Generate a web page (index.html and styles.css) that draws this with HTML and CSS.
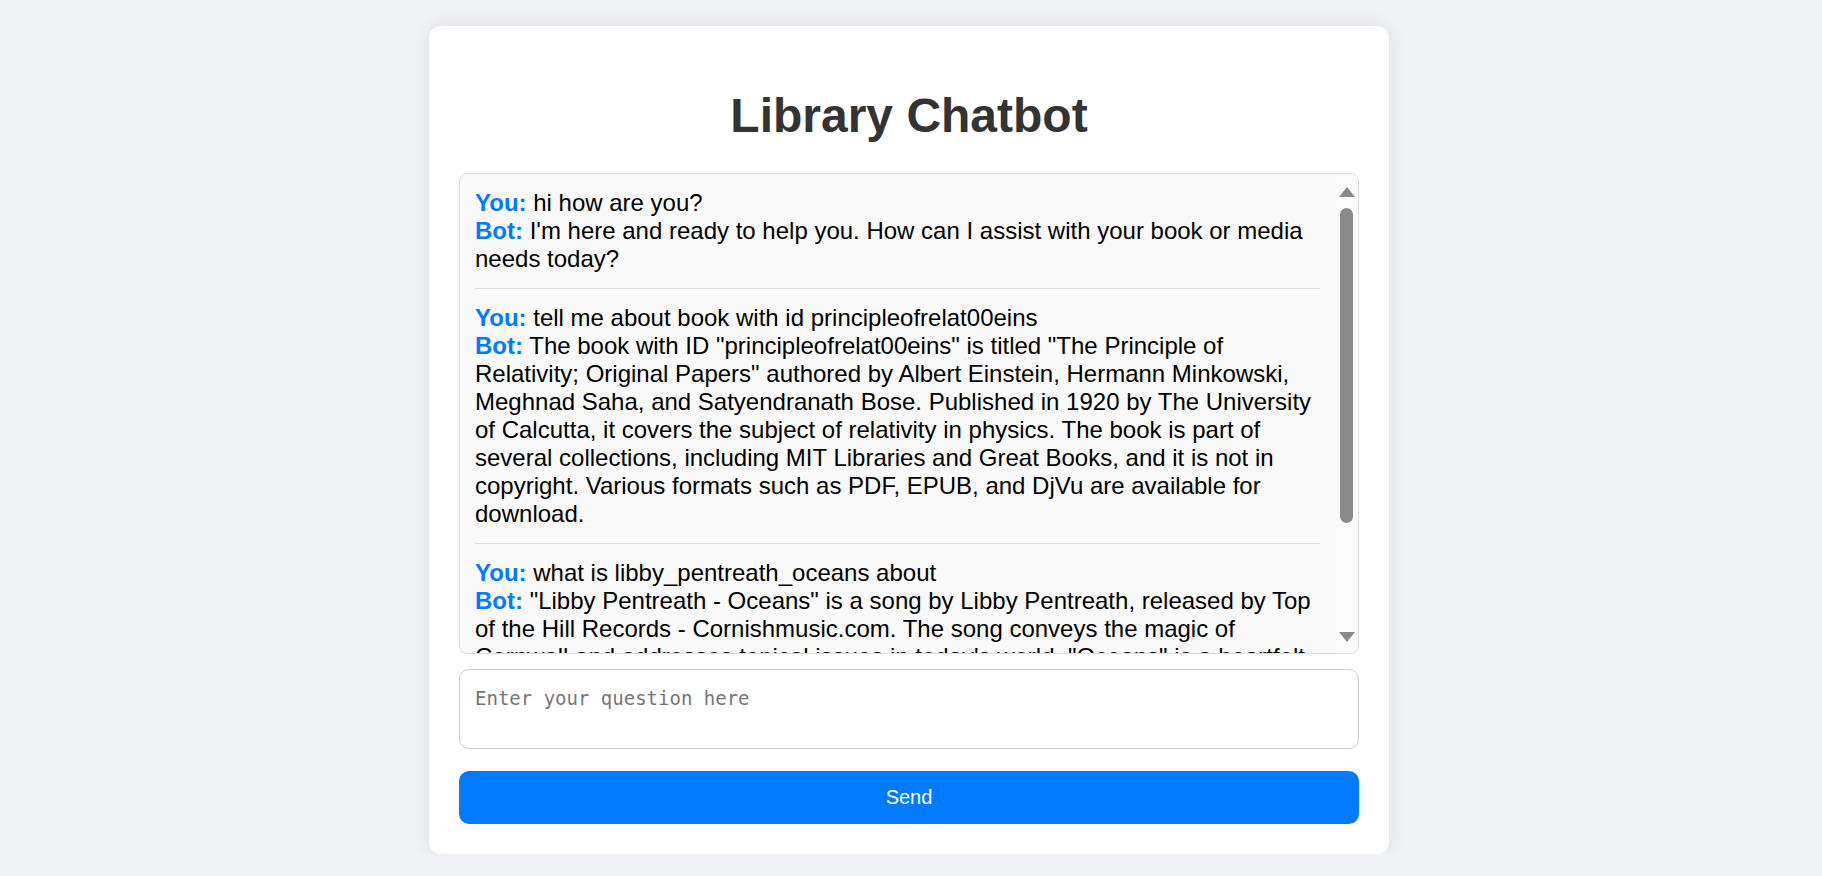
FILE: index.html
```html
<!DOCTYPE html>
<html lang="en">
<head>
<meta charset="utf-8">
<title>Library Chatbot</title>
<link rel="stylesheet" href="styles.css">
</head>
<body>
  <main class="card">
    <h1 class="title">Library Chatbot</h1>
    <div class="chat-box">
      <div class="chat-scroll">
        <div class="message">
          <div><span class="who">You:</span> hi how are you?</div>
          <div><span class="who">Bot:</span> I'm here and ready to help you. How can I assist with your book or media needs today?</div>
        </div>
        <div class="message">
          <div><span class="who">You:</span> tell me about book with id principleofrelat00eins</div>
          <div><span class="who">Bot:</span> The book with ID "principleofrelat00eins" is titled "The Principle of Relativity; Original Papers" authored by Albert Einstein, Hermann Minkowski, Meghnad Saha, and Satyendranath Bose. Published in 1920 by The University of Calcutta, it covers the subject of relativity in physics. The book is part of several collections, including MIT Libraries and Great Books, and it is not in copyright. Various formats such as PDF, EPUB, and DjVu are available for download.</div>
        </div>
        <div class="message">
          <div><span class="who">You:</span> what is libby_pentreath_oceans about</div>
          <div><span class="who">Bot:</span> "Libby Pentreath - Oceans" is a song by Libby Pentreath, released by Top of the Hill Records - Cornishmusic.com. The song conveys the magic of Cornwall and addresses topical issues in today's world. "Oceans" is a heartfelt tribute to the sea and the Cornish coastline, blending folk and acoustic influences with thoughtful lyrics.</div>
        </div>
      </div>
      <div class="scrollbar" aria-hidden="true">
        <span class="arrow arrow-up"></span>
        <span class="thumb"></span>
        <span class="track-rest"></span>
        <span class="arrow arrow-down"></span>
      </div>
    </div>
    <textarea class="question" placeholder="Enter your question here"></textarea>
    <button class="send" type="button">Send</button>
  </main>
</body>
</html>
```
FILE: styles.css
```css
html, body {
  margin: 0;
  padding: 0;
}

body {
  background: #eff1f5;
  font-family: "Liberation Sans", Arial, sans-serif;
  font-size: 24px;
  color: #000;
  padding-top: 26px;
  padding-right: 4px;
}

.card {
  width: 900px;
  margin: 0 auto;
  padding: 30px;
  background: #fff;
  border-radius: 12px;
  box-shadow: 0 0 18px rgba(0, 0, 0, 0.08);
  display: flex;
  flex-direction: column;
}

.title {
  margin: 32px 0 30px;
  font-size: 48px;
  font-weight: bold;
  text-align: center;
  color: #333;
}

.chat-box {
  height: 479px;
  border: 1px solid #ddd;
  border-radius: 8px;
  background: #f9f9f9;
  display: flex;
  overflow: hidden;
}

.chat-scroll {
  flex: 1;
  padding: 15px;
  overflow: hidden;
}

.message {
  padding-bottom: 15px;
  margin-bottom: 15px;
  border-bottom: 1px solid #ddd;
}

.who {
  color: #007bff;
  font-weight: bold;
}

.scrollbar {
  width: 23px;
  flex: none;
  background: #fafafa;
  display: flex;
  flex-direction: column;
  align-items: center;
  padding: 13px 0 11px;
  box-sizing: border-box;
}

.arrow {
  width: 0;
  height: 0;
  border-left: 8px solid transparent;
  border-right: 8px solid transparent;
}

.arrow-up {
  border-bottom: 10px solid #8a8a8a;
}

.arrow-down {
  border-top: 10px solid #8a8a8a;
}

.thumb {
  width: 13px;
  height: 315px;
  margin-top: 11px;
  border-radius: 7px;
  background: #8a8a8a;
}

.track-rest {
  flex: 1;
}

.question {
  margin-top: 15px;
  box-sizing: border-box;
  width: 100%;
  height: 80px;
  padding: 17px 15px 13px;
  border: 1px solid #ccc;
  border-radius: 10px;
  font-family: "DejaVu Sans Mono", "Liberation Mono", monospace;
  font-size: 19px;
  resize: none;
  background: #fff;
}

.question::placeholder {
  color: #767676;
}

.send {
  margin-top: 22px;
  width: 100%;
  padding: 15px;
  border: none;
  border-radius: 10px;
  background: #007bff;
  color: #fff;
  font-family: "Liberation Sans", Arial, sans-serif;
  font-size: 20px;
  line-height: 23px;
  cursor: pointer;
}
```
